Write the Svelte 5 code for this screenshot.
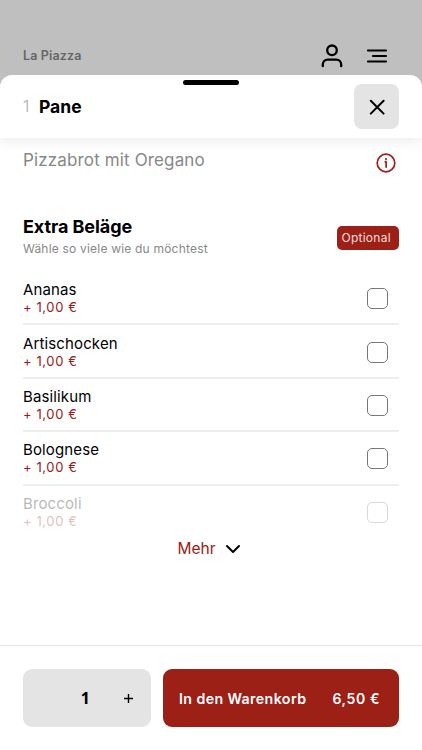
<script lang="ts">
	type Topping = { name: string; price: string };

	const toppings: Topping[] = [
		{ name: 'Ananas', price: '+ 1,00 €' },
		{ name: 'Artischocken', price: '+ 1,00 €' },
		{ name: 'Basilikum', price: '+ 1,00 €' },
		{ name: 'Bolognese', price: '+ 1,00 €' },
		{ name: 'Broccoli', price: '+ 1,00 €' }
	];

	let selected: string[] = $state([]);
	let quantity = $state(1);

	const total = $derived(
		((6.5 + selected.length) * quantity).toFixed(2).replace('.', ',') + ' €'
	);
</script>

<div class="page">
	<header class="topbar">
		<span class="brand">La Piazza</span>
		<svg class="user" width="22" height="24" viewBox="0 0 22 24" aria-hidden="true">
			<circle cx="11" cy="6.3" r="4.8" />
			<path d="M1.8 22.2v-1.6c0-3 2-5 4.9-5h8.6c2.9 0 4.9 2 4.9 5v1.6" />
		</svg>
		<svg class="menu" width="22" height="14" viewBox="0 0 22 14" aria-hidden="true">
			<path d="M2 1.5h18M7 7h13M2 12.5h18" />
		</svg>
	</header>

	<section class="sheet">
		<div class="sheet-head">
			<span class="handle"></span>
			<span class="number">1</span>
			<h1>Pane</h1>
			<button class="close" aria-label="Schließen">
				<svg width="16" height="16" viewBox="0 0 16 16">
					<path d="M1.8 1.8l12.8 12.8M14.6 1.8L1.8 14.6" />
				</svg>
			</button>
		</div>

		<div class="content">
			<div class="description">
				<p>Pizzabrot mit Oregano</p>
				<svg class="info" width="20" height="20" viewBox="0 0 20 20" aria-hidden="true">
					<circle cx="10" cy="10" r="8.8" />
					<path d="M9.3 8.7h.8v5.4" />
					<circle class="dot" cx="10" cy="6" r="1.1" />
				</svg>
			</div>

			<div class="group-head">
				<div>
					<h2>Extra Beläge</h2>
					<p>Wähle so viele wie du möchtest</p>
				</div>
				<span class="tag">Optional</span>
			</div>

			<div class="list">
				{#each toppings as topping, i}
					<label class="row" class:faded={i === toppings.length - 1}>
						<span class="label">
							<span class="name">{topping.name}</span>
							<span class="price">{topping.price}</span>
						</span>
						<input type="checkbox" value={topping.name} bind:group={selected} />
					</label>
				{/each}
			</div>

			<button class="more">
				<span>Mehr</span>
				<svg width="16" height="10" viewBox="0 0 16 10" aria-hidden="true">
					<path d="M2 2l6 6 6-6" />
				</svg>
			</button>
		</div>

		<footer>
			<div class="stepper">
				<span class="count">{quantity}</span>
				<button aria-label="Mehr" onclick={() => quantity++}>
					<svg width="9" height="9" viewBox="0 0 9 9">
						<path d="M4.5 0v9M0 4.5h9" />
					</svg>
				</button>
			</div>
			<button class="cart">
				<span class="action">In den Warenkorb</span>
				<span class="total">{total}</span>
			</button>
		</footer>
	</section>
</div>

<style>
	:global(body) {
		margin: 0;
	}

	.page {
		display: flex;
		flex-direction: column;
		height: 750px;
		overflow: hidden;
		background: #bfbfbf;
		color: #000;
		font-family: Inter, 'Liberation Sans', sans-serif;
	}

	* {
		box-sizing: border-box;
	}

	h1,
	h2,
	p {
		margin: 0;
	}

	button {
		border: none;
		padding: 0;
		background: none;
		color: inherit;
		font: inherit;
		cursor: pointer;
	}

	svg {
		display: block;
		flex: none;
		fill: none;
		stroke: #000;
		stroke-width: 2;
		stroke-linecap: round;
		stroke-linejoin: round;
	}

	.topbar {
		display: flex;
		align-items: center;
		height: 75px;
		padding: 37px 34px 0 23px;
	}

	.brand {
		flex: 1;
		margin-top: -1px;
		color: #666;
		font-size: 12.5px;
		font-weight: 600;
		letter-spacing: 0.14px;
	}

	.user {
		margin-right: 23px;
		stroke-width: 2.3;
	}

	.menu {
		stroke-width: 2.2;
	}

	.sheet {
		display: flex;
		flex: 1;
		flex-direction: column;
		border-radius: 12px 12px 0 0;
		background: #fff;
	}

	.sheet-head {
		position: relative;
		display: flex;
		align-items: center;
		height: 63px;
		padding: 0 23px;
		box-shadow: 0 4px 12px rgba(0, 0, 0, 0.07);
		clip-path: inset(0 0 -20px 0);
	}

	.handle {
		position: absolute;
		top: 5px;
		left: 183px;
		width: 56px;
		height: 5px;
		border-radius: 3px;
		background: #000;
	}

	.number {
		width: 16px;
		color: #bbb;
		font-size: 15.5px;
	}

	h1 {
		flex: 1;
		font-size: 17.5px;
		font-weight: 700;
	}

	.close {
		display: grid;
		place-items: center;
		width: 45px;
		height: 45px;
		border-radius: 8px;
		background: #e4e4e4;
	}

	.content {
		flex: 1;
		padding: 0 23px;
	}

	.description {
		display: flex;
		justify-content: space-between;
		height: 77px;
		padding: 11px 3px 0 0;
		color: #888;
		font-size: 17px;
		line-height: 22px;
		letter-spacing: 0.14px;
	}

	.info {
		margin-top: 4px;
		stroke: #9c2016;
		stroke-width: 1.7;
	}

	.dot {
		fill: #9c2016;
		stroke: none;
	}

	.group-head {
		display: flex;
		align-items: center;
		justify-content: space-between;
		height: 45px;
	}

	h2 {
		font-size: 18px;
		font-weight: 700;
		line-height: 22px;
		letter-spacing: -0.08px;
	}

	.group-head p {
		color: #888;
		font-size: 12px;
		line-height: 22px;
		letter-spacing: 0.2px;
	}

	.tag {
		width: 62px;
		height: 24px;
		padding-left: 4.5px;
		border-radius: 5px;
		background: #9c2016;
		color: #f6dedb;
		font-size: 12px;
		line-height: 24px;
		letter-spacing: 0.25px;
	}

	.list {
		padding-top: 12px;
	}

	.row {
		display: flex;
		align-items: center;
		justify-content: space-between;
		height: 53.4px;
		padding-right: 11px;
		border-bottom: 2px solid #eee;
	}

	.row.faded {
		border-bottom-color: transparent;
	}

	.faded .label,
	.faded input {
		opacity: 0.28;
	}

	.label {
		display: flex;
		flex-direction: column;
		padding-top: 2.4px;
	}

	.name {
		font-size: 15px;
		line-height: 18px;
		letter-spacing: 0.13px;
	}

	.price {
		color: #9c2016;
		font-size: 13px;
		line-height: 17.4px;
		letter-spacing: 0.6px;
	}

	input {
		width: 21px;
		height: 21px;
		margin: 2px 0 0;
		border: 1.3px solid #777;
		border-radius: 5px;
		appearance: none;
	}

	input:checked {
		background: #9c2016;
	}

	.more {
		display: flex;
		align-items: center;
		gap: 9px;
		margin: 0 auto;
		padding-right: 4px;
		color: #9c2016;
		font-size: 15.5px;
		line-height: 20px;
	}

	footer {
		display: flex;
		gap: 12px;
		height: 105px;
		padding: 23px 23px 0;
		border-top: 1px solid #e4e4e4;
	}

	.stepper {
		display: flex;
		align-items: center;
		justify-content: flex-end;
		width: 128px;
		height: 58px;
		border-radius: 9px;
		background: #e4e4e4;
	}

	.count {
		font-family: 'Noto Sans', sans-serif;
		font-size: 16px;
		font-weight: 700;
	}

	.stepper button {
		padding: 10px 18px 10px 34px;
	}

	.stepper svg {
		stroke-width: 1.4;
		stroke-linecap: butt;
	}

	.cart {
		display: flex;
		flex: 1;
		align-items: center;
		justify-content: space-between;
		height: 58px;
		padding: 0 19px 0 16px;
		border-radius: 9px;
		background: #9c2016;
		color: #fff;
		font-size: 14px;
		font-weight: 600;
	}

	.action {
		font-size: 14.2px;
		letter-spacing: 0.4px;
	}

	.total {
		letter-spacing: 0.6px;
	}
</style>
